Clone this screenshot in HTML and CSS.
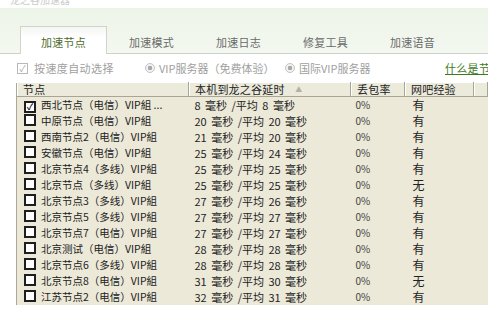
FILE: index.html
```html
<!DOCTYPE html>
<html lang="zh-CN">
<head>
<meta charset="UTF-8">
<title>加速节点</title>
<link rel="stylesheet" href="styles.css">
</head>
<body>

<div class="window">
    <div class="title">龙之谷加速器</div>

    <div class="tabbar">
        <div class="tab active">加速节点</div>
        <div class="tab">加速模式</div>
        <div class="tab">加速日志</div>
        <div class="tab">修复工具</div>
        <div class="tab">加速语音</div>
    </div>

    <div class="options">
        <span class="opt opt-auto"><span class="check">&#10003;</span>按速度自动选择</span>
        <span class="opt opt-vip"><span class="radio"></span>VIP服务器（免费体验）</span>
        <span class="opt opt-intl"><span class="radio"></span>国际VIP服务器</span>
        <a class="help" href="#">什么是节点</a>
    </div>

    <table class="nodes">
        <colgroup>
            <col class="c-name">
            <col class="c-ping">
            <col class="c-loss">
            <col class="c-exp">
            <col>
        </colgroup>
        <thead>
            <tr>
                <th>节点</th>
                <th>本机到龙之谷延时 <span class="sort">&#9650;</span></th>
                <th>丢包率</th>
                <th>网吧经验</th>
                <th></th>
            </tr>
        </thead>
        <tbody>
            <tr><td><span class="box on">&#10003;</span>西北节点（电信）VIP組 ...</td><td>8 毫秒 /平均 8 毫秒</td><td>0%</td><td>有</td><td></td></tr>
            <tr><td><span class="box"></span>中原节点（电信）VIP組</td><td>20 毫秒 /平均 20 毫秒</td><td>0%</td><td>有</td><td></td></tr>
            <tr><td><span class="box"></span>西南节点2（电信）VIP組</td><td>21 毫秒 /平均 20 毫秒</td><td>0%</td><td>有</td><td></td></tr>
            <tr><td><span class="box"></span>安徽节点（电信）VIP組</td><td>25 毫秒 /平均 24 毫秒</td><td>0%</td><td>有</td><td></td></tr>
            <tr><td><span class="box"></span>北京节点4（多线）VIP組</td><td>25 毫秒 /平均 25 毫秒</td><td>0%</td><td>有</td><td></td></tr>
            <tr><td><span class="box"></span>北京节点（多线）VIP組</td><td>25 毫秒 /平均 25 毫秒</td><td>0%</td><td>无</td><td></td></tr>
            <tr><td><span class="box"></span>北京节点3（多线）VIP組</td><td>27 毫秒 /平均 26 毫秒</td><td>0%</td><td>有</td><td></td></tr>
            <tr><td><span class="box"></span>北京节点5（多线）VIP組</td><td>27 毫秒 /平均 27 毫秒</td><td>0%</td><td>有</td><td></td></tr>
            <tr><td><span class="box"></span>北京节点7（电信）VIP組</td><td>27 毫秒 /平均 27 毫秒</td><td>0%</td><td>有</td><td></td></tr>
            <tr><td><span class="box"></span>北京测试（电信）VIP組</td><td>28 毫秒 /平均 28 毫秒</td><td>0%</td><td>有</td><td></td></tr>
            <tr><td><span class="box"></span>北京节点6（多线）VIP組</td><td>28 毫秒 /平均 28 毫秒</td><td>0%</td><td>有</td><td></td></tr>
            <tr><td><span class="box"></span>北京节点8（电信）VIP組</td><td>31 毫秒 /平均 30 毫秒</td><td>0%</td><td>无</td><td></td></tr>
            <tr><td><span class="box"></span>江苏节点2（电信）VIP組</td><td>32 毫秒 /平均 31 毫秒</td><td>0%</td><td>有</td><td></td></tr>
        </tbody>
    </table>
</div>

</body>
</html>
```

FILE: styles.css
```css
body {
    margin: 0;
    background: #fff;
    font-family: "Noto Sans CJK SC", "DejaVu Sans", sans-serif;
    font-size: 11px;
    color: #222;
}
.window {
    width: 488px;
    overflow: hidden;
}
.title {
    height: 8px;
    overflow: hidden;
    line-height: 0;
    padding-left: 10px;
    color: #cccccc;
    font-size: 10px;
}
.tabbar {
    height: 45px;
    display: flex;
    align-items: flex-end;
    padding-left: 20px;
    gap: 2px;
    background: linear-gradient(#edf4e8, #f3f8f0);
    border-bottom: 1px solid #cbd3c4;
}
.tab {
    width: 85px;
    height: 26px;
    line-height: 30px;
    text-align: center;
    font-size: 11px;
    letter-spacing: 0.3px;
    color: #6a6a6a;
}
.tab.active {
    background: linear-gradient(#f4f6f2, #fff 40%);
    border: 1px solid #cfd6c9;
    border-bottom: none;
    margin-bottom: -1px;
    height: 27px;
    color: #4d6a2c;
}
.options {
    height: 28px;
    display: flex;
    align-items: center;
    padding-left: 17px;
    color: #a0a0a0;
    font-size: 11px;
    white-space: nowrap;
    overflow: hidden;
}
.opt {
    display: flex;
    align-items: center;
    flex-shrink: 0;
}
.opt-auto {
    width: 128px;
    letter-spacing: 0.4px;
}
.opt-vip {
    width: 140px;
}
.opt-intl {
    width: 160px;
}
.check {
    width: 9px;
    height: 9px;
    border: 1px solid #b8b8b8;
    margin-right: 6px;
    font-size: 9px;
    line-height: 9px;
    text-align: center;
    color: #a8a8a8;
    letter-spacing: 0;
}
.radio {
    width: 8px;
    height: 8px;
    border-radius: 50%;
    border: 1px solid #c4c4c4;
    background: radial-gradient(circle, #a8a8a8 0 2px, #f2f2f2 2.5px);
    margin-right: 4px;
}
.help {
    flex-shrink: 0;
    color: #3d7a1e;
    text-decoration: underline;
    font-size: 11px;
    letter-spacing: 0.3px;
}
.nodes {
    margin-left: 16px;
    width: 472px;
    border-collapse: collapse;
    table-layout: fixed;
    background: #ece9d8;
    border-left: 1px solid #aca899;
}
.c-name { width: 172px; }
.c-ping { width: 162px; }
.c-loss { width: 54px; }
.c-exp { width: 69px; }
.nodes th {
    height: 13px;
    padding: 0 0 0 6px;
    text-align: left;
    font-weight: normal;
    font-size: 11px;
    letter-spacing: 0.2px;
    line-height: 13px;
    color: #222;
    background: #ebeadb;
    border-top: 1px solid #fff;
    border-bottom: 1px solid #a8a594;
    border-right: 1px solid #a8a594;
    box-shadow: inset 1px 0 0 #fff;
    white-space: nowrap;
    overflow: hidden;
}
.sort {
    color: #b3b0a2;
    font-size: 7px;
    margin-left: 8px;
    vertical-align: 2px;
}
.nodes td {
    height: 16px;
    padding: 0 0 0 6px;
    line-height: 16px;
    white-space: nowrap;
    overflow: hidden;
    font-size: 11px;
    word-spacing: 2px;
}
.nodes td:first-child {
    padding-left: 7px;
    font-size: 10.5px;
    word-spacing: 0;
}
.nodes td:nth-child(3) {
    padding-left: 5px;
    font-size: 10px;
    color: #444;
}
.nodes td:nth-child(4) {
    padding-left: 8px;
    font-size: 12px;
}
.box {
    display: inline-block;
    width: 8px;
    height: 8px;
    border: 2px solid #1e1e1e;
    background: #fff;
    margin-right: 5px;
    vertical-align: -1px;
    font-size: 9px;
    line-height: 8px;
    text-align: center;
    font-weight: bold;
}
```
